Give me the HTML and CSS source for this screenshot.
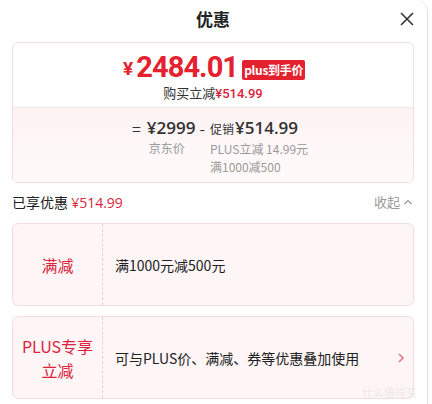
FILE: index.html
```html
<!DOCTYPE html>
<html lang="zh">
<head>
<meta charset="utf-8">
<link rel="stylesheet" href="styles.css">
</head>
<body>
<div class="panel">
  <header class="head">
    <h1 class="title">优惠</h1>
    <span class="close">
      <svg width="16" height="16" viewBox="0 0 16 16"><path d="M2 2L14 14M14 2L2 14" stroke="#333" stroke-width="1.6" fill="none"/></svg>
    </span>
  </header>

  <section class="summary">
    <div class="sum-top">
      <div class="price-line">
        <span class="price"><span class="yen">¥</span>2484.01</span>
        <span class="badge">plus到手价</span>
      </div>
      <div class="sub">购买立减<span class="red">¥514.99</span></div>
    </div>
    <div class="sum-bottom">
      <div class="eq">
        <span class="op">=</span>
        <div class="col">
          <span class="val">¥2999</span>
          <span class="note">京东价</span>
        </div>
        <span class="op minus">-</span>
        <div class="col">
          <span class="val"><small>促销</small>¥514.99</span>
          <span class="note">PLUS立减 14.99元</span>
          <span class="note">满1000减500</span>
        </div>
      </div>
    </div>
  </section>

  <div class="enjoy">
    <span>已享优惠 <span class="red">¥514.99</span></span>
    <span class="fold">收起
      <svg width="10" height="10" viewBox="0 0 10 10"><path d="M1.5 7L5 3.5L8.5 7" stroke="#999" stroke-width="1.2" fill="none"/></svg>
    </span>
  </div>

  <div class="promo">
    <div class="promo-tag">满减</div>
    <div class="promo-text">满1000元减500元</div>
  </div>

  <div class="promo">
    <div class="promo-tag">PLUS专享<br>立减</div>
    <div class="promo-text">可与PLUS价、满减、券等优惠叠加使用</div>
    <svg class="chev" width="10" height="12" viewBox="0 0 10 12"><path d="M3 2L7 6L3 10" stroke="#e07a86" stroke-width="1.6" fill="none"/></svg>
  </div>

  <span class="mark">什么值得买</span>
</div>
</body>
</html>
```
FILE: styles.css
```css
* { box-sizing: border-box; }
html, body { margin: 0; padding: 0; background: #fff; }
body {
  font-family: "Noto Sans CJK SC", "Noto Sans", sans-serif;
  color: #222;
  width: 432px;
  height: 404px;
  overflow: hidden;
}
.panel {
  position: relative;
  width: 428px;
  height: 404px;
  border-right: 1px solid #e2e2e2;
  border-top-right-radius: 12px;
  padding: 0 13px 0 12px;
}
.head {
  height: 42px;
  display: flex;
  align-items: center;
  justify-content: center;
  position: relative;
}
.title {
  margin: 0 0 4px 0;
  font-size: 17px;
  font-weight: 700;
  line-height: 20px;
  color: #222;
}
.close {
  position: absolute;
  right: -1px;
  top: 11px;
  width: 16px;
  height: 16px;
  display: flex;
}
.summary {
  border: 1px solid #f3dfe2;
  border-radius: 6px;
  overflow: hidden;
  height: 141px;
  display: flex;
  flex-direction: column;
}
.sum-top {
  height: 65px;
  border-bottom: 1px solid #f7e8ea;
  display: flex;
  flex-direction: column;
  align-items: center;
  padding-top: 11px;
}
.price-line {
  display: flex;
  align-items: center;
  height: 30px;
  gap: 4px;
  padding-left: 2px;
}
.price {
  font-family: "Roboto", "Noto Sans", sans-serif;
  font-weight: 700;
  font-size: 29px;
  letter-spacing: -0.9px;
  color: #e4212f;
  line-height: 30px;
}
.yen { font-size: 19px; margin-right: 4px; position: relative; top: -2px; }
.badge {
  background: #e4212f;
  color: #fff;
  font-size: 12px;
  font-weight: 700;
  line-height: 20px;
  padding: 0 2px;
  border-radius: 2px;
  margin-top: 2px;
  letter-spacing: -0.3px;
}
.sub {
  font-size: 13px;
  line-height: 18px;
  color: #333;
  margin-top: 0;
}
.sub .red { font-family: "Roboto", "Noto Sans", sans-serif; font-weight: 500; }
.red { color: #d9233c; }
.sum-bottom {
  flex: 1;
  background: linear-gradient(#fdf3f4, #fffafa);
  display: flex;
  justify-content: center;
  padding-top: 9px;
}
.eq {
  display: flex;
  align-items: flex-start;
  padding-left: 14px;
}
.op {
  font-size: 16px;
  line-height: 22px;
  color: #333;
  margin-right: 6px;
}
.minus { margin: 0 5px 0 4px; }
.col {
  display: flex;
  flex-direction: column;
}
.val {
  font-family: "Open Sans", "Noto Sans CJK SC", sans-serif;
  font-size: 17px;
  font-weight: 600;
  line-height: 22px;
  color: #333;
}
.val small { font-family: "Noto Sans CJK SC", sans-serif; font-size: 12px; font-weight: 400; margin-right: 1px; }
.note {
  font-size: 12px;
  line-height: 18px;
  color: #999;
}
.eq .col:first-of-type .note { padding-left: 2px; }
.enjoy {
  display: flex;
  justify-content: space-between;
  align-items: center;
  height: 40px;
  font-size: 14px;
  color: #222;
  padding-bottom: 3px;
}
.enjoy .red { font-family: "Open Sans", sans-serif; font-size: 14px; }
.fold {
  color: #999;
  font-size: 13px;
  display: flex;
  align-items: center;
  gap: 3px;
  padding-right: 1px;
}
.promo {
  position: relative;
  display: flex;
  align-items: center;
  height: 83px;
  background: #fdf5f6;
  border: 1px solid #f3dfe2;
  border-radius: 6px;
  margin-bottom: 10px;
}
.promo-tag {
  width: 90px;
  align-self: stretch;
  border-right: 1px dashed #e6d2d5;
  display: flex;
  align-items: center;
  justify-content: center;
  text-align: center;
  color: #d9233c;
  font-size: 16px;
  line-height: 24px;
}
.promo-text {
  flex: 1;
  padding-left: 12px;
  font-size: 14px;
  color: #222;
}
.chev {
  margin-right: 7px;
}
.mark {
  position: absolute;
  right: 10px;
  bottom: 4px;
  font-size: 11px;
  color: rgba(220,220,220,0.5);
}
```
